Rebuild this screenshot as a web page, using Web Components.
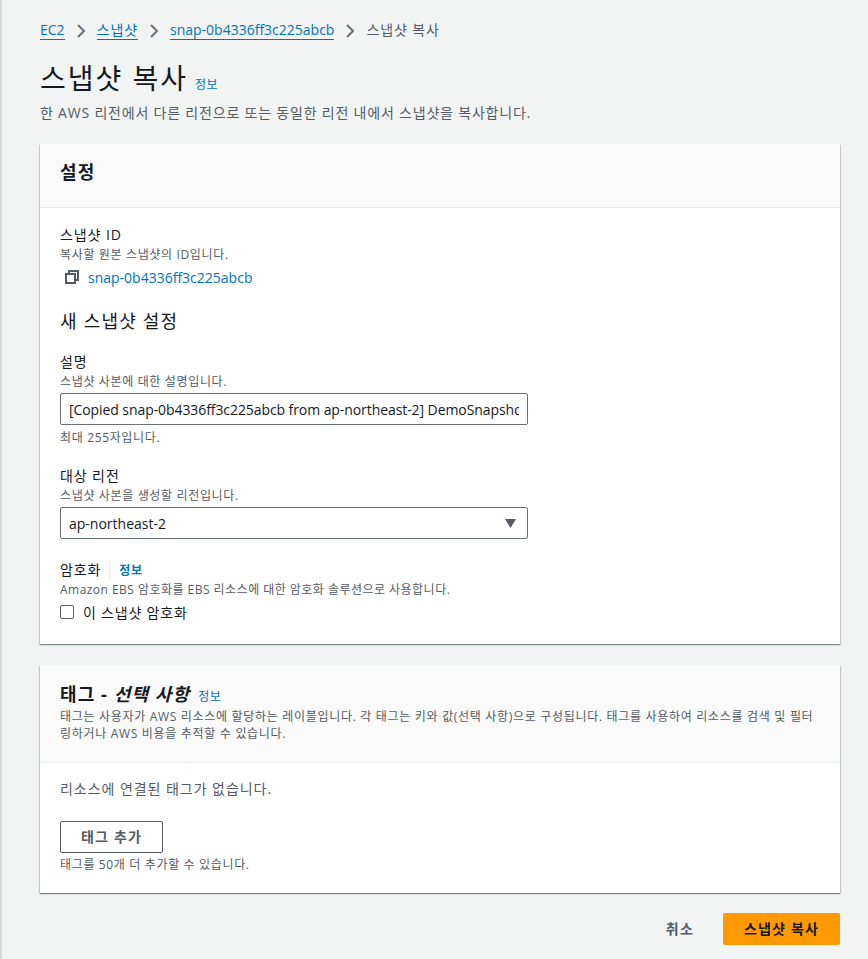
<!DOCTYPE html>
<html lang="ko">
<head>
<meta charset="utf-8">
<title>스냅샷 복사</title>
<style>
    html, body { margin: 0; height: 100%; }
    body {
        background: #f2f3f3;
        color: #16191f;
        font-family: "Open Sans", "Noto Sans CJK KR", sans-serif;
        font-size: 14px;
        overflow: hidden;
    }
</style>
</head>
<body>
<aws-page>
    <aws-breadcrumbs slot="crumbs">
        <a href="#">EC2</a>
        <aws-chevron></aws-chevron>
        <a href="#" class="ko">스냅샷</a>
        <aws-chevron></aws-chevron>
        <a href="#">snap-0b4336ff3c225abcb</a>
        <aws-chevron></aws-chevron>
        <span class="ko">스냅샷 복사</span>
    </aws-breadcrumbs>
    <aws-page-head slot="head" description="한 AWS 리전에서 다른 리전으로 또는 동일한 리전 내에서 스냅샷을 복사합니다.">스냅샷 복사</aws-page-head>

    <aws-card>
        <span slot="title">설정</span>
        <aws-field label="스냅샷 ID" hint="복사할 원본 스냅샷의 ID입니다." style="margin-top:-1px">
            <aws-copy-link>snap-0b4336ff3c225abcb</aws-copy-link>
        </aws-field>
        <h3 style="font:400 18px/24px 'Open Sans','Noto Sans CJK KR',sans-serif;letter-spacing:1.2px;margin:21px 0 19px;">새 스냅샷 설정</h3>
        <aws-field label="설명" hint="스냅샷 사본에 대한 설명입니다." note="최대 255자입니다.">
            <aws-input value="[Copied snap-0b4336ff3c225abcb from ap-northeast-2] DemoSnapshot"></aws-input>
        </aws-field>
        <aws-field label="대상 리전" hint="스냅샷 사본을 생성할 리전입니다." style="margin-top:20px">
            <aws-select value="ap-northeast-2"></aws-select>
        </aws-field>
        <aws-field label="암호화" info hint="Amazon EBS 암호화를 EBS 리소스에 대한 암호화 솔루션으로 사용합니다." style="margin-top:21px;--hint-spacing:.47px">
            <aws-checkbox>이 스냅샷 암호화</aws-checkbox>
        </aws-field>
    </aws-card>

    <aws-card class="tags" tall>
        <span slot="title">태그 - <i>선택 사항</i></span>
        <aws-info slot="title-info"></aws-info>
        <span slot="description">태그는 사용자가 AWS 리소스에 할당하는 레이블입니다. 각 태그는 키와 값(선택 사항)으로 구성됩니다. 태그를 사용하여 리소스를 검색 및 필터링하거나 AWS 비용을 추적할 수 있습니다.</span>
        <aws-tag-editor></aws-tag-editor>
    </aws-card>

    <aws-actions slot="actions"></aws-actions>
</aws-page>

<script>
const FONT = `"Open Sans", "Noto Sans CJK KR", sans-serif`;

class AwsPage extends HTMLElement {
    constructor() {
        super();
        this.attachShadow({ mode: 'open' }).innerHTML = `
            <style>
                :host {
                    display: flex;
                    flex-direction: column;
                    box-sizing: border-box;
                    min-height: 959px;
                    padding: 20px 28px 0 38px;
                    border-left: 2px solid #d5dbdb;
                }
                .cards { display: flex; flex-direction: column; gap: 21px; }
            </style>
            <slot name="crumbs"></slot>
            <slot name="head"></slot>
            <div class="cards"><slot></slot></div>
            <slot name="actions"></slot>
        `;
    }
}

class AwsBreadcrumbs extends HTMLElement {
    constructor() {
        super();
        this.attachShadow({ mode: 'open' }).innerHTML = `
            <style>
                :host { display: flex; align-items: center; gap: 11px; height: 20px; font-size: 14px; line-height: 20px; }
                ::slotted(a) { color: #0073bb; text-decoration: none; border-bottom: 1px solid #0073bb; line-height: 18px; }
                ::slotted(span) { color: #545b64; }
                ::slotted(.ko) { letter-spacing: .9px; }
            </style>
            <slot></slot>
        `;
    }
}

class AwsChevron extends HTMLElement {
    constructor() {
        super();
        this.attachShadow({ mode: 'open' }).innerHTML = `
            <style>
                :host { display: block; width: 10px; height: 16px; margin-top: 2px; }
                svg { display: block; }
            </style>
            <svg width="10" height="16" viewBox="0 0 10 16"><path d="M2 2 L8 8 L2 14" fill="none" stroke="#687078" stroke-width="2"/></svg>
        `;
    }
}

class AwsInfo extends HTMLElement {
    constructor() {
        super();
        this.attachShadow({ mode: 'open' }).innerHTML = `
            <style>
                :host { display: inline-block; color: #0073bb; font: 700 12px/16px ${FONT}; letter-spacing: .5px; }
            </style>
            정보
        `;
    }
}

class AwsPageHead extends HTMLElement {
    constructor() {
        super();
        this.attachShadow({ mode: 'open' }).innerHTML = `
            <style>
                :host { display: block; height: 104px; padding-top: 16px; box-sizing: border-box; }
                .row { display: flex; align-items: baseline; gap: 7px; height: 44px; }
                h1 { margin: 0; font: 400 28px/44px ${FONT}; color: #16191f; letter-spacing: 2px; }
                aws-info { font-weight: 400; }
                p { margin: 3px 0 0; font-size: 14px; line-height: 20px; color: #545b64; letter-spacing: .8px; }
            </style>
            <div class="row"><h1><slot></slot></h1><aws-info></aws-info></div>
            <p class="desc"></p>
        `;
    }
    connectedCallback() {
        this.shadowRoot.querySelector('.desc').textContent = this.getAttribute('description');
    }
}

class AwsCard extends HTMLElement {
    constructor() {
        super();
        this.attachShadow({ mode: 'open' }).innerHTML = `
            <style>
                :host {
                    display: block;
                    background: #fff;
                    box-shadow: 0 1px 1px 0 rgba(0,28,36,.3), 1px 1px 1px 0 rgba(0,28,36,.15), -1px 1px 1px 0 rgba(0,28,36,.15);
                }
                header {
                    background: #fafafa;
                    border-bottom: 1px solid #eaeded;
                    padding: 14px 20px 21px;
                }
                .title { display: flex; align-items: baseline; gap: 8px; font: 700 18px/28px ${FONT}; letter-spacing: 1.1px; }
                ::slotted(aws-info) { font-weight: 400; }
                .sub { display: block; font-size: 12px; line-height: 17px; color: #545b64; letter-spacing: .69px; }
                :host([tall]) header { padding: 15px 20px 20px; }
                .body { padding: 18px 20px 21px; }
                :host([tall]) .body { padding: 16px 20px 20px; }
            </style>
            <header>
                <div class="title"><span><slot name="title"></slot></span><slot name="title-info"></slot></div>
                <span class="sub"><slot name="description"></slot></span>
            </header>
            <div class="body"><slot></slot></div>
        `;
    }
}

class AwsField extends HTMLElement {
    constructor() {
        super();
        this.attachShadow({ mode: 'open' }).innerHTML = `
            <style>
                :host { display: block; }
                .label { display: flex; align-items: center; font-size: 14px; line-height: 20px; color: #16191f; letter-spacing: .9px; margin-bottom: 2px; }
                .label aws-info { margin-left: 8px; padding-left: 9px; border-left: 1px solid #eaeded; line-height: 19px; }
                .hint { font-size: 12px; line-height: 16px; color: #545b64; margin-bottom: 3px; letter-spacing: var(--hint-spacing, .65px); }
                .note { font-size: 12px; line-height: 16px; color: #545b64; margin-top: 5px; letter-spacing: .65px; }
            </style>
            <div class="label"></div>
            <div class="hint"></div>
            <slot></slot>
            <div class="note"></div>
        `;
    }
    connectedCallback() {
        const root = this.shadowRoot;
        root.querySelector('.label').textContent = this.getAttribute('label');
        if (this.hasAttribute('info')) {
            root.querySelector('.label').appendChild(document.createElement('aws-info'));
        }
        root.querySelector('.hint').textContent = this.getAttribute('hint');
        const note = root.querySelector('.note');
        if (this.hasAttribute('note')) note.textContent = this.getAttribute('note');
        else note.remove();
    }
}

class AwsCopyLink extends HTMLElement {
    constructor() {
        super();
        this.attachShadow({ mode: 'open' }).innerHTML = `
            <style>
                :host { display: flex; align-items: center; gap: 9px; height: 22px; padding-left: 5px; color: #0073bb; font-size: 14px; letter-spacing: 0; }
                svg { display: block; }
            </style>
            <svg width="14" height="14" viewBox="0 0 14 14" fill="none" stroke="#545b64" stroke-width="2">
                <rect x="1" y="4" width="9" height="9"/>
                <path d="M4 4 V1 H13 V10 H10"/>
            </svg>
            <slot></slot>
        `;
    }
}

class AwsInput extends HTMLElement {
    constructor() {
        super();
        this.attachShadow({ mode: 'open' }).innerHTML = `
            <style>
                :host { display: block; width: 468px; margin-top: 2px; }
                input {
                    display: block;
                    box-sizing: border-box;
                    width: 100%;
                    height: 32px;
                    padding: 0 8px;
                    border: 1px solid #687078;
                    border-radius: 2px;
                    background: #fff;
                    color: #16191f;
                    font: 14px/22px ${FONT};
                    letter-spacing: -.08px;
                    outline: none;
                }
            </style>
            <input type="text">
        `;
    }
    connectedCallback() {
        this.shadowRoot.querySelector('input').value = this.getAttribute('value');
    }
}

class AwsSelect extends HTMLElement {
    constructor() {
        super();
        this.attachShadow({ mode: 'open' }).innerHTML = `
            <style>
                :host {
                    display: flex;
                    align-items: center;
                    justify-content: space-between;
                    box-sizing: border-box;
                    width: 468px;
                    height: 32px;
                    margin-top: 1px;
                    padding: 0 11px 0 8px;
                    border: 1px solid #687078;
                    border-radius: 2px;
                    background: #fff;
                    font-size: 14px;
                }
                svg { display: block; }
            </style>
            <span class="v"></span>
            <svg width="11" height="9" viewBox="0 0 11 9"><path d="M0 0 H11 L5.5 9 Z" fill="#545b64"/></svg>
        `;
    }
    connectedCallback() {
        this.shadowRoot.querySelector('.v').textContent = this.getAttribute('value');
    }
}

class AwsCheckbox extends HTMLElement {
    constructor() {
        super();
        this.attachShadow({ mode: 'open' }).innerHTML = `
            <style>
                :host { display: flex; align-items: center; gap: 9px; height: 22px; font-size: 14px; letter-spacing: .8px; }
                i { display: block; box-sizing: border-box; width: 14px; height: 14px; border: 1px solid #545b64; border-radius: 2px; background: #fff; }
            </style>
            <i></i><span><slot></slot></span>
        `;
    }
}

class AwsTagEditor extends HTMLElement {
    constructor() {
        super();
        this.attachShadow({ mode: 'open' }).innerHTML = `
            <style>
                :host { display: block; color: #545b64; }
                p { margin: 0; font-size: 14px; line-height: 20px; letter-spacing: .95px; }
                button {
                    display: block;
                    box-sizing: border-box;
                    width: 103px;
                    height: 32px;
                    margin-top: 22px;
                    border: 1px solid #545b64;
                    border-radius: 2px;
                    background: #fff;
                    color: #545b64;
                    font: 700 14px/20px ${FONT};
                    letter-spacing: 1.2px;
                    padding: 0;
                }
                small { display: block; margin-top: 4px; font-size: 12px; line-height: 16px; letter-spacing: .65px; }
            </style>
            <p>리소스에 연결된 태그가 없습니다.</p>
            <button>태그 추가</button>
            <small>태그를 50개 더 추가할 수 있습니다.</small>
        `;
    }
}

class AwsActions extends HTMLElement {
    constructor() {
        super();
        this.attachShadow({ mode: 'open' }).innerHTML = `
            <style>
                :host { display: flex; justify-content: flex-end; align-items: center; gap: 29px; margin-top: 20px; }
                span { color: #545b64; font: 700 14px/20px ${FONT}; letter-spacing: 1.2px; }
                button {
                    box-sizing: border-box;
                    width: 117px;
                    height: 32px;
                    border: 0;
                    border-radius: 2px;
                    padding: 0;
                    background: #ff9900;
                    color: #16191f;
                    font: 700 14px/20px ${FONT};
                    letter-spacing: 1.2px;
                }
            </style>
            <span>취소</span>
            <button>스냅샷 복사</button>
        `;
    }
}

customElements.define('aws-page', AwsPage);
customElements.define('aws-chevron', AwsChevron);
customElements.define('aws-breadcrumbs', AwsBreadcrumbs);
customElements.define('aws-info', AwsInfo);
customElements.define('aws-page-head', AwsPageHead);
customElements.define('aws-card', AwsCard);
customElements.define('aws-field', AwsField);
customElements.define('aws-copy-link', AwsCopyLink);
customElements.define('aws-input', AwsInput);
customElements.define('aws-select', AwsSelect);
customElements.define('aws-checkbox', AwsCheckbox);
customElements.define('aws-tag-editor', AwsTagEditor);
customElements.define('aws-actions', AwsActions);
</script>
</body>
</html>
